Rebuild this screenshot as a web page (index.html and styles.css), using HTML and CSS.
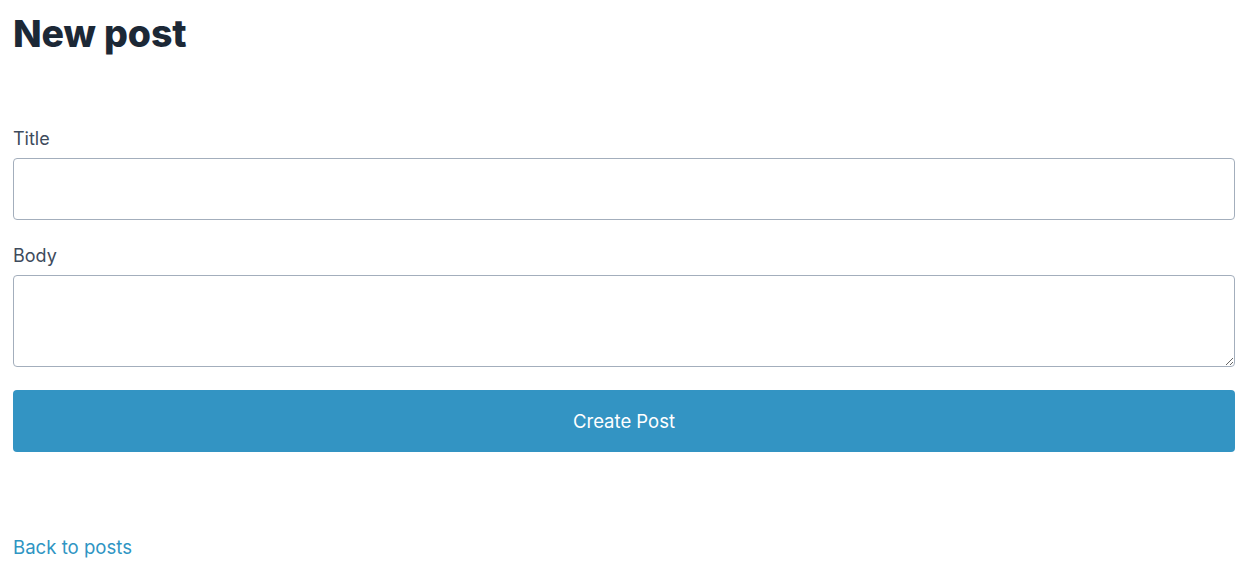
FILE: index.html
```html
<!DOCTYPE html>
<html lang="en">
<head>
<meta charset="utf-8">
<title>New post</title>
<link rel="stylesheet" href="styles.css">
</head>
<body>
<main class="page">
  <h1 class="page-title">New post</h1>
  <form class="post-form">
    <div class="field field-title">
      <label class="field-label" for="title">Title</label>
      <input class="field-input" id="title" type="text">
    </div>
    <div class="field field-body">
      <label class="field-label" for="body">Body</label>
      <textarea class="field-textarea" id="body"></textarea>
    </div>
    <button class="submit-btn" type="submit">Create Post</button>
  </form>
  <a class="back-link" href="#">Back to posts</a>
</main>
</body>
</html>
```
FILE: styles.css
```css
* { box-sizing: border-box; }
html, body { margin: 0; background: #fff; }
body {
  font-family: Inter, "Noto Sans", sans-serif;
  color: #1e2a38;
}
.page {
  padding: 0 15px 0 13px;
  display: flex;
  flex-direction: column;
}
.page-title {
  margin: 10px 0 0;
  font-size: 37.5px;
  line-height: 48px;
  font-weight: 800;
  letter-spacing: -0.1px;
  color: #1c2836;
}
.post-form {
  margin-top: 70px;
  display: flex;
  flex-direction: column;
}
.field {
  display: flex;
  flex-direction: column;
}
.field-title { margin-bottom: 25px; }
.field-body { margin-bottom: 23px; }
.field-label {
  font-size: 18px;
  line-height: 22px;
  color: #3e4b5c;
  margin-bottom: 8px;
}
.field-input, .field-textarea {
  width: 100%;
  border: 1px solid #a3aebc;
  border-radius: 4px;
  background: #fff;
  font: inherit;
  padding: 8px 12px;
}
.field-input { height: 62px; }
.field-textarea { height: 92px; resize: vertical; display: block; }
.submit-btn {
  height: 62px;
  border: none;
  border-radius: 4px;
  background: #3394c3;
  color: #fff;
  font-family: inherit;
  font-size: 18.5px;
}
.back-link {
  margin-top: 84px;
  align-self: flex-start;
  font-size: 18.6px;
  line-height: 22px;
  color: #2f95c3;
  text-decoration: none;
}
```
